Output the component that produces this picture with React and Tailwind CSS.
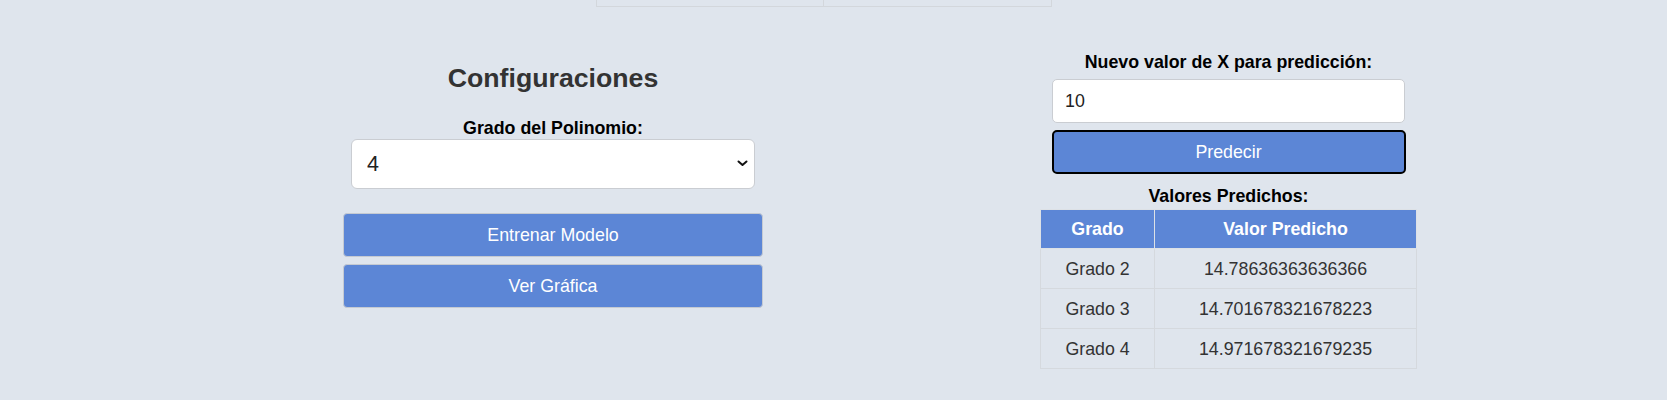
import React, { useState } from 'react';

const predicciones = [
  { grado: 'Grado 2', valor: '14.78636363636366' },
  { grado: 'Grado 3', valor: '14.701678321678223' },
  { grado: 'Grado 4', valor: '14.971678321679235' },
];

const App = () => {
  const [grado, setGrado] = useState('4');
  const [nuevoX, setNuevoX] = useState('10');

  return (
    <div className="min-h-[400px] bg-[#dfe5ed] font-['Liberation_Sans',Arial,sans-serif] text-[17.8px] leading-[20px] text-black">
      {/* tail of the data table above */}
      <div className="ml-[596px] flex h-[7px] w-[456px] border-x border-b border-[#d3d7dc]">
        <div className="w-1/2 border-r border-[#d3d7dc]" />
        <div className="w-1/2" />
      </div>

      <div className="flex items-start">
        {/* Configuraciones */}
        <div className="ml-[343px] flex w-[420px] flex-col items-center pt-[56px]">
          <h2 className="text-[26.7px] leading-[30px] font-bold text-[#333]">Configuraciones</h2>
          <label className="mt-[25px] font-bold">Grado del Polinomio:</label>
          <div className="relative mt-px w-[404px]">
            <select
              value={grado}
              onChange={(e) => setGrado(e.target.value)}
              className="h-[50px] w-full appearance-none rounded-[6px] border border-[#cacdd2] bg-white pl-[15px] text-[21.5px] text-[#222]"
            >
              <option value="2">2</option>
              <option value="3">3</option>
              <option value="4">4</option>
            </select>
            <svg className="pointer-events-none absolute right-[7px] top-[21px] h-[7px] w-[11px]" viewBox="0 0 11 7" fill="none">
              <path d="M1.5 1.5 L5.5 5 L9.5 1.5" stroke="#111" strokeWidth="2" strokeLinecap="round" strokeLinejoin="round" />
            </svg>
          </div>
          <button className="mt-[24px] h-[44px] w-full rounded-[4px] border border-[#c5cad2] bg-[#5c86d6] text-white">
            Entrenar Modelo
          </button>
          <button className="mt-[7px] h-[44px] w-full rounded-[4px] border border-[#c5cad2] bg-[#5c86d6] text-white">
            Ver Gráfica
          </button>
        </div>

        {/* Predicción */}
        <div className="ml-[277px] flex w-[377px] flex-col items-center pt-[45px]">
          <label className="font-bold">Nuevo valor de X para predicción:</label>
          <input
            type="number"
            value={nuevoX}
            onChange={(e) => setNuevoX(e.target.value)}
            className="mt-[7px] h-[44px] w-[353px] rounded-[5px] border border-[#cacdd2] bg-white px-[12px] text-[#222] outline-none"
          />
          <button className="mt-[7px] h-[44px] w-[354px] rounded-[5px] border-2 border-black bg-[#5c86d6] text-white">
            Predecir
          </button>
          <h3 className="mt-[12px] font-bold">Valores Predichos:</h3>
          <table className="mt-[3px] w-full border-collapse text-center text-[#333]">
            <thead>
              <tr className="bg-[#5c86d6] text-white">
                <th className="h-[39px] w-[114px] border border-[#dde1e6] font-bold">Grado</th>
                <th className="h-[39px] border border-[#dde1e6] font-bold">Valor Predicho</th>
              </tr>
            </thead>
            <tbody>
              {predicciones.map((p) => (
                <tr key={p.grado}>
                  <td className="h-[40px] border border-[#d5d9de]">{p.grado}</td>
                  <td className="h-[40px] border border-[#d5d9de]">{p.valor}</td>
                </tr>
              ))}
            </tbody>
          </table>
        </div>
      </div>
    </div>
  );
};

export default App;
